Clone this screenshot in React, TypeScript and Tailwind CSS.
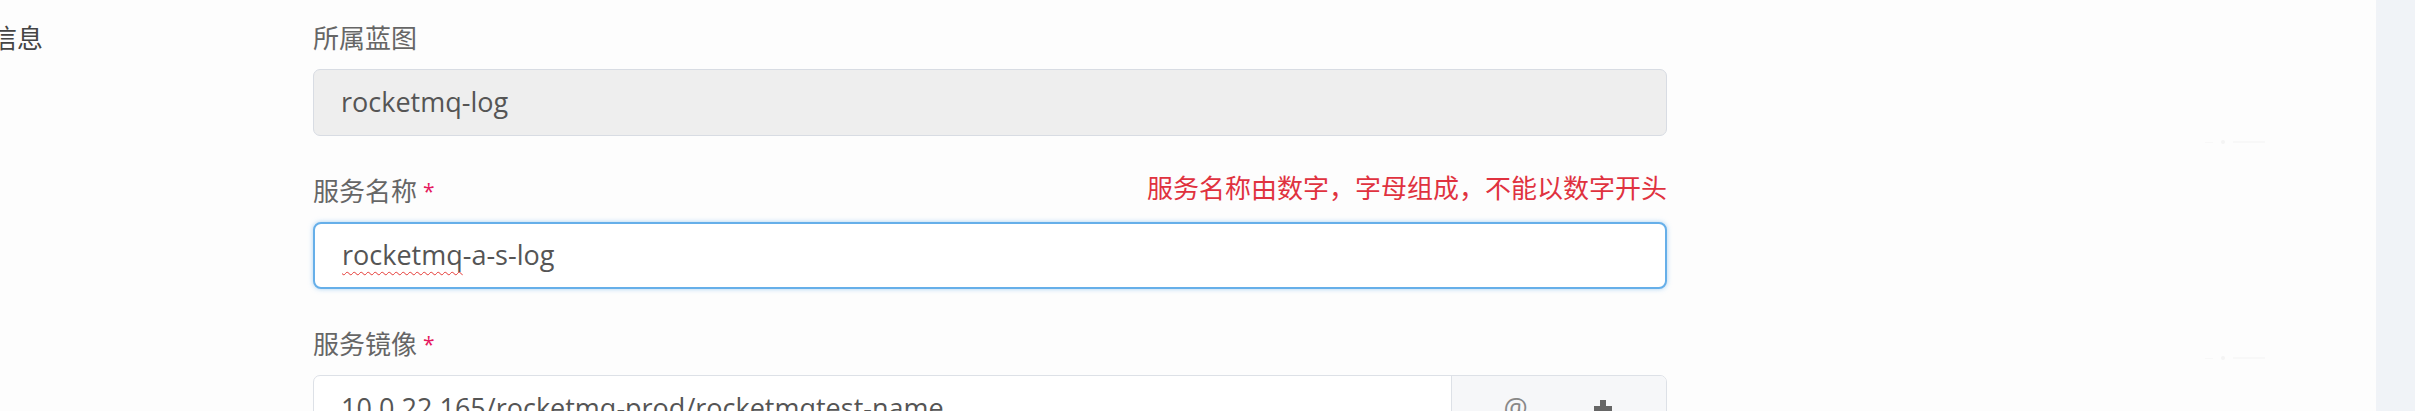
import React from "react";

const font = "font-['Open_Sans','Noto_Sans_CJK_SC',sans-serif]";

function Label({ text, required }: { text: string; required?: boolean }) {
  return (
    <span className="text-[26px] text-[#666]">
      {text}
      {required && <span className="relative -top-[2px] ml-[6px] text-[21px] text-[#e5195f]">*</span>}
    </span>
  );
}

export default function App() {
  return (
    <div className={`flex h-[411px] w-[2415px] overflow-hidden bg-[#fdfdfd] ${font}`}>
      <div className="flex flex-1">
        {/* section title, cut off on the left */}
        <div className="w-[313px] shrink-0 pt-[18px]">
          <div className="-ml-[61px] h-[40px] text-[26px] leading-[40px] text-[#444]">基本信息</div>
        </div>

        {/* form */}
        <div className="flex w-[1354px] shrink-0 flex-col gap-[35px] pt-[18px]">
          <div>
            <div className="flex h-[40px] items-center">
              <Label text="所属蓝图" />
            </div>
            <div className="mt-[11px] flex h-[67px] items-center rounded-[7px] border-[1.5px] border-[#d8dce3] bg-[#eeeeee] pl-[27px] text-[27px] text-[#555]">
              rocketmq-log
            </div>
          </div>

          <div>
            <div className="flex h-[40px] items-center justify-between">
              <Label text="服务名称" required />
              <span className="-mt-[6px] text-[26px] text-[#e0323f]">
                服务名称由数字，字母组成，不能以数字开头
              </span>
            </div>
            <div className="mt-[11px] flex h-[67px] items-center rounded-[8px] border-2 border-[#66afe9] bg-white pl-[27px] text-[27px] text-[#555] shadow-[0_0_5px_rgba(102,175,233,0.55)]">
              <span className="underline decoration-wavy decoration-[#e53935] decoration-1 underline-offset-[6px]">
                rocketmq
              </span>
              -a-s-log
            </div>
          </div>

          <div>
            <div className="flex h-[40px] items-center">
              <Label text="服务镜像" required />
            </div>
            <div className="mt-[11px] flex h-[67px] overflow-hidden rounded-[7px] border-[1.5px] border-[#dde1e7] bg-white">
              <div className="flex flex-1 items-center pl-[27px] text-[27px] text-[#555]">
                10.0.22.165/rocketmq-prod/rocketmqtest-name
              </div>
              <div className="flex w-[215px] items-center justify-around border-l-[1.5px] border-[#dde1e7] bg-[#f6f7f9] px-[20px]">
                <span className="text-[27px] text-[#888]">@</span>
                <svg width="24" height="24" viewBox="0 0 24 24">
                  <path d="M12 3v18M3 12h18" stroke="#666" strokeWidth="6" />
                </svg>
              </div>
            </div>
          </div>
        </div>

        {/* faint marks on the right */}
        <div className="ml-[538px] flex flex-col gap-[212px] pt-[140px]">
          <div className="flex items-center gap-[8px]">
            <div className="h-[1px] w-[8px] bg-[#f8f8f8]" />
            <div className="h-[4px] w-[4px] rounded-full bg-[#f4f4f4]" />
            <div className="h-[2px] w-[32px] bg-[#f8f8f8]" />
          </div>
          <div className="flex items-center gap-[8px]">
            <div className="h-[1px] w-[8px] bg-[#f8f8f8]" />
            <div className="h-[4px] w-[4px] rounded-full bg-[#f4f4f4]" />
            <div className="h-[2px] w-[32px] bg-[#f8f8f8]" />
          </div>
        </div>
      </div>

      <div className="w-[39px] shrink-0 bg-[#f0f3f7]" />
    </div>
  );
}
